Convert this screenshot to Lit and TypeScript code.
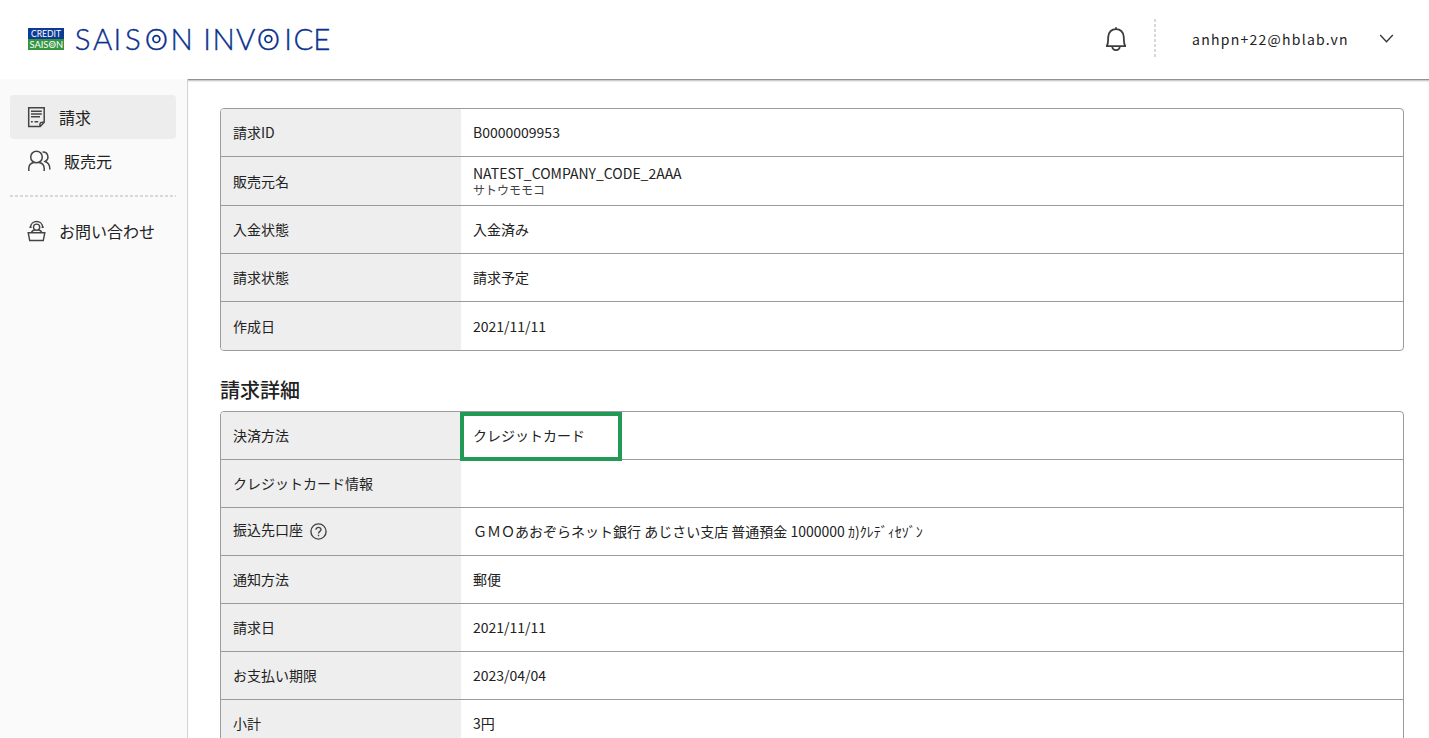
import { LitElement, html, css, svg, nothing } from "lit";
import { customElement, property } from "lit/decorators.js";

interface Row {
  label: string;
  value: string;
  sub?: string;
  help?: boolean;
  marked?: boolean;
  height?: number;
}

const SUMMARY: Row[] = [
  { label: "請求ID", value: "B0000009953", height: 48 },
  { label: "販売元名", value: "NATEST_COMPANY_CODE_2AAA", sub: "サトウモモコ", height: 49 },
  { label: "入金状態", value: "入金済み", height: 48 },
  { label: "請求状態", value: "請求予定", height: 48 },
  { label: "作成日", value: "2021/11/11", height: 48 },
];

const DETAILS: Row[] = [
  { label: "決済方法", value: "クレジットカード", marked: true },
  { label: "クレジットカード情報", value: "" },
  { label: "振込先口座", value: "ＧＭＯあおぞらネット銀行 あじさい支店 普通預金 1000000 ｶ)ｸﾚﾃﾞｨｾｿﾞﾝ", help: true },
  { label: "通知方法", value: "郵便" },
  { label: "請求日", value: "2021/11/11" },
  { label: "お支払い期限", value: "2023/04/04" },
  { label: "小計", value: "3円", height: 47 },
];

@customElement("saison-logo")
class SaisonLogo extends LitElement {
  static styles = css`
    :host { display: block; }
    svg { display: block; }
    .word { font-family: Lato, sans-serif; font-weight: 300; font-size: 29.5px; fill: #0b308e; stroke: #0b308e; stroke-width: 0.35; }
    .ring { fill: none; stroke: #0b308e; stroke-width: 1.7; }
    .mini { font-family: Lato, sans-serif; font-size: 9px; fill: #fff; }
    .mini-ring { fill: none; stroke: #fff; stroke-width: 0.7; }
  `;
  render() {
    return html`<svg width="304" height="30" viewBox="0 0 304 30">
      <rect y="4" width="36" height="11" fill="#0d3a94" />
      <rect y="15" width="36" height="11" fill="#35963f" />
      <text class="mini" x="3" y="13" textLength="30" lengthAdjust="spacingAndGlyphs">CREDIT</text>
      <text class="mini" x="1.5" y="23.8" textLength="33.5" lengthAdjust="spacingAndGlyphs">SAISON</text>
      <circle class="mini-ring" cx="24.2" cy="20.6" r="1.3" />
      <text class="word" y="25.6" x="46.8 64.9 85.6 97 116.8 142.4 162 175.2 184.5 208 228.8 256.2 265.6 285.2">SAISON INVOICE</text>
      ${[128.4, 240.4].map((cx) => svg`<circle class="ring" cx=${cx} cy="15.1" r="3.4" />`)}
    </svg>`;
  }
}

@customElement("info-table")
class InfoTable extends LitElement {
  @property({ attribute: false }) rows: Row[] = [];
  static styles = css`
    :host { display: block; }
    .table { border: 1px solid #9b9b9b; border-radius: 4px; }
    .row { display: flex; box-sizing: border-box; border-bottom: 1px solid #9b9b9b; }
    .row:last-child { border-bottom: 0; }
    .label { width: 240px; box-sizing: border-box; padding-left: 12px; background: #eee; display: flex; align-items: center; gap: 7px; line-height: 21px; }
    .row:first-child .label { border-top-left-radius: 3px; }
    .row:last-child .label { border-bottom-left-radius: 3px; }
    .value { position: relative; flex: 1; padding-left: 12px; display: flex; flex-direction: column; justify-content: center; }
    .main { line-height: 21px; white-space: pre; }
    .sub { font-size: 12px; line-height: 13px; color: #444; margin: -1px 0 3px; }
    .mark { position: absolute; left: -1px; top: 0; width: 154px; height: 41px; border: 4px solid #229954; z-index: 1; }
    .raised { padding-bottom: 5px; line-height: 20px; }
    .help svg { display: block; }
  `;
  render() {
    return html`<div class="table">
      ${this.rows.map((r) => html`
        <div class="row" style="height:${r.height ?? 48}px">
          <div class="label">
            ${r.help
              ? html`<span class="raised">${r.label}</span><span class="help"><svg width="17" height="17" viewBox="0 0 17 17" fill="none" stroke="#444" stroke-width="1.4">
                  <circle cx="8.5" cy="8.5" r="7.6" />
                  <path d="M6 6.8c0-3.3 5.1-3.2 5 0C11 8.4 8.5 8.5 8.5 10.4M8.5 11.7v1.5" />
                </svg></span>`
              : r.label}
          </div>
          <div class="value">
            <span class="main">${r.value}</span>
            ${r.sub ? html`<span class="sub">${r.sub}</span>` : nothing}
            ${r.marked ? html`<div class="mark"></div>` : nothing}
          </div>
        </div>`)}
    </div>`;
  }
}

@customElement("app-root")
class AppRoot extends LitElement {
  static styles = css`
    :host {
      display: flex; flex-direction: column; height: 100vh; overflow: hidden; background: #fff; color: #222;
      font: 14px "Noto Sans CJK JP", sans-serif;
    }
    .header { flex: none; height: 79px; box-sizing: border-box; display: flex; align-items: center; padding: 0 35px 1px 28px; }
    .right { margin-left: auto; display: flex; align-items: center; }
    .divider { width: 2px; height: 40px; margin: 0 36px 0 27px; background: repeating-linear-gradient(#d8d8d8 0 3px, transparent 3px 5px); }
    .mail { letter-spacing: 1.26px; line-height: 20px; padding-bottom: 1px; width: 157px; margin-right: 30px; white-space: nowrap; }
    .body { flex: 1; min-height: 0; display: flex; }
    .side { width: 188px; box-sizing: border-box; border-right: 1px solid #d4d4d4; background: #fafafa; padding: 16px 11px 0 10px; }
    .item { height: 44px; display: flex; align-items: center; padding-left: 17px; border-radius: 4px; font-size: 16px; gap: 13px; }
    .item svg { flex: none; margin-top: -1px; }
    .active { background: #ededed; }
    .wide { gap: 12px; }
    .sep { height: 2px; margin: 12px 0; background: repeating-linear-gradient(90deg, #d8d8d8 0 3px, transparent 3px 5px); }
    .main { flex: 1; min-width: 0; border-top: 1px solid #929292; box-shadow: inset 0 2px 2px -1px #bbb; padding: 28px 25px 0 32px; }
    .title { margin: 24px 0 6px; font-size: 20px; line-height: 30px; font-weight: 500; }
  `;
  render() {
    return html`
      <header class="header">
        <saison-logo></saison-logo>
        <div class="right">
          <svg width="22" height="26" viewBox="0 0 22 26" fill="none" stroke="#3c3c3c" stroke-width="1.8">
            <path d="M11 1.2v2M1 20.2h20M1.9 19.800C3.600 17 2.800 14 3.300 10.500C4 5.500 6.800 3.200 11 3.200S18 5.500 18.700 10.500C19.200 14 18.400 17 20.100 19.800M7.200 20.500C7.600 25.300 14.400 25.300 14.800 20.500" />
          </svg>
          <div class="divider"></div>
          <div class="mail">anhpn+22@hblab.vn</div>
          <svg width="15" height="10" viewBox="0 0 15 10" fill="none" stroke="#333" stroke-width="1.3"><path d="M1.2 1l6.3 6.8L13.8 1" /></svg>
        </div>
      </header>
      <div class="body">
        <nav class="side">
          <div class="item active">
            <svg width="19" height="22" viewBox="0 0 19 22" fill="none" stroke="#444" stroke-width="1.5">
              <path d="M1.7 1.7h15.5v14.5l-4 4.2H1.7zM13 20c-.5-3 .6-4.2 4-3.8M4 5.200h10.800M4 8h10.800M4 10.800h9M4 15.800h1.800M7.500 15.800h3.700" />
            </svg>請求
          </div>
          <div class="item wide">
            <svg width="25" height="22" viewBox="0 0 25 22" fill="none" stroke="#444" stroke-width="1.5">
              <circle cx="9.5" cy="7" r="5.8" />
              <path d="M1.8 21v-2.5c0-3.5 2-5.3 5-5.9M12.2 12.6c3 .6 5 2.4 5 5.9V21M15.5 2.1c5.8-.4 7.3 6.6 2.6 9.4 3.2 1 4.8 3.4 4.8 8" />
            </svg>販売元
          </div>
          <div class="sep"></div>
          <div class="item">
            <svg width="19" height="22" viewBox="0 0 19 22" fill="none" stroke="#444" stroke-width="1.4">
              <path d="M3.500 7.500C3.800-.6 15.400-.6 15.700 7.500M2.400 7.200h2.200M14.600 7.200h2.200M4.600 12.400c.2-1.500 1.200-2.100 3.200-2.400M11.400 10c2 .3 3 .9 3.200 2.400M1.200 12.700h16.600l-1.500 7.800H2.700z" />
              <circle cx="9.6" cy="7.200" r="3.100" />
            </svg>お問い合わせ
          </div>
        </nav>
        <main class="main">
          <info-table .rows=${SUMMARY}></info-table>
          <h2 class="title">請求詳細</h2>
          <info-table .rows=${DETAILS}></info-table>
        </main>
      </div>`;
  }
}
